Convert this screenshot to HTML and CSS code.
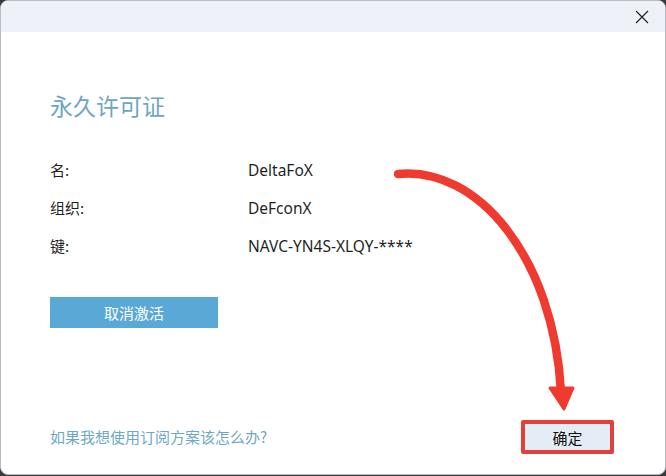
FILE: index.html
```html
<!DOCTYPE html>
<html lang="zh-CN">
<head>
  <meta charset="UTF-8">
  <title>永久许可证</title>
  <link rel="stylesheet" href="styles.css">
</head>
<body>
  <div class="window">
    <div class="titlebar">
      <button class="close" aria-label="关闭">
        <svg width="14" height="14" viewBox="0 0 14 14"><path d="M1 1 L13 13 M13 1 L1 13" stroke="#222" stroke-width="1.2" fill="none"></path></svg>
      </button>
    </div>

    <div class="content">
      <h1 class="heading">永久许可证</h1>

      <div class="info">
        <div class="info__label">名:</div>
        <div class="info__value">DeltaFoX</div>
        <div class="info__label">组织:</div>
        <div class="info__value">DeFconX</div>
        <div class="info__label">键:</div>
        <div class="info__value">NAVC-YN4S-XLQY-****</div>
      </div>

      <button class="btn-deactivate">取消激活</button>

      <div class="footer">
        <a class="link" href="#">如果我想使用订阅方案该怎么办?</a>
        <button class="btn-ok">确定</button>
      </div>
    </div>

    <!-- annotation drawn on top of the dialog -->
    <svg class="annotation" width="666" height="476" viewBox="0 0 666 476">
      <path d="M 398 174 C 478 166, 554 258, 561 392" stroke="#ef3a30" stroke-width="8.5" stroke-linecap="round" fill="none"></path>
      <path d="M 550 388 L 573 388 L 564 409 Z" fill="#ef3a30" stroke="#ef3a30" stroke-width="3" stroke-linejoin="round"></path>
    </svg>
  </div>
</body>
</html>
```

FILE: styles.css
```css
html, body {
  margin: 0;
  padding: 0;
}

body {
  background-color: #3a3a3a;
  font-family: "Noto Sans", "Noto Sans CJK SC", sans-serif;
  color: #1f1f1f;
}

.window {
  position: relative;
  box-sizing: border-box;
  width: 666px;
  height: 475px;
  background-color: #fff;
  border: 1px solid #b9bcc2;
  border-radius: 8px;
  overflow: hidden;
  display: flex;
  flex-direction: column;
}

.titlebar {
  height: 31px;
  background-color: #eef1f8;
  display: flex;
  justify-content: flex-end;
  align-items: center;
  flex-shrink: 0;
}

.close {
  background: none;
  border: 0;
  padding: 0;
  width: 46px;
  height: 31px;
  display: flex;
  align-items: center;
  justify-content: center;
}

.content {
  flex: 1;
  padding: 0 51px 0 49px;
  display: flex;
  flex-direction: column;
}

.heading {
  margin: 58px 0 0;
  font-family: "Noto Sans CJK SC", sans-serif;
  font-weight: 400;
  font-size: 23px;
  line-height: 30px;
  color: #6ea6c2;
}

.info {
  margin-top: 40px;
  display: grid;
  grid-template-columns: 198px 1fr;
  row-gap: 18px;
  font-size: 15.5px;
  line-height: 20px;
}

.info__label {
  font-family: "Noto Sans CJK SC", sans-serif;
  font-size: 15px;
}

.btn-deactivate {
  margin-top: 41px;
  width: 168px;
  height: 31px;
  border: 0;
  background-color: #5aa8d6;
  color: #fff;
  font-family: "Noto Sans CJK SC", sans-serif;
  font-size: 15px;
  padding: 0;
}

.footer {
  margin-top: auto;
  margin-bottom: 20px;
  display: flex;
  justify-content: space-between;
  align-items: center;
}

.link {
  font-family: "Noto Sans CJK SC", sans-serif;
  font-size: 15px;
  color: #6ea8c6;
  text-decoration: none;
  margin-top: -1px;
}

.btn-ok {
  box-sizing: border-box;
  width: 93px;
  height: 34px;
  border: 4px solid #e2403c;
  border-radius: 2px;
  background-color: #e4ecf6;
  color: #111;
  font-family: "Noto Sans CJK SC", sans-serif;
  font-size: 15px;
  padding: 0;
}

.annotation {
  position: absolute;
  left: -1px;
  top: -1px;
  pointer-events: none;
}
```
